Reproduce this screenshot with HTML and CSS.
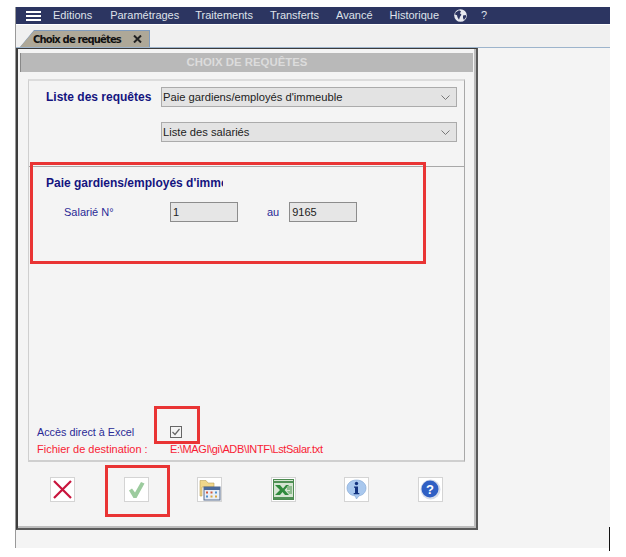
FILE: index.html
```html
<!DOCTYPE html>
<html lang="fr">
<head>
<meta charset="utf-8">
<title>Choix de requêtes</title>
<link rel="stylesheet" href="styles.css">
</head>
<body>
<div class="app">
  <nav class="menu">
    <svg class="burger" width="15" height="10" viewBox="0 0 15 10"><path d="M0 0h15v2H0zM0 4h15v2H0zM0 8h15v2H0z" fill="#fff"/></svg>
    <span class="m1">Editions</span>
    <span class="m2">Paramétrages</span>
    <span class="m3">Traitements</span>
    <span class="m4">Transferts</span>
    <span class="m5">Avancé</span>
    <span class="m6">Historique</span>
    <svg class="globe" width="13" height="13" viewBox="0 0 13 13"><circle cx="6.5" cy="6.5" r="6.3" fill="#e8eaf0"/><path d="M1.500 3.500 5 1.200l2 1-1 2 1.500 1.500-1.500 2-1 3-1.500-2.500-.5-2-2-.7zM9 6.500l2.800-.5.3 2-2.100 3-1-2z" fill="#2c3561"/></svg>
    <span class="m7">?</span>
  </nav>
  <div class="tabstrip">
    <div class="tab-edge"><div class="tab"><span>Choix de requêtes</span><svg class="tab-close" width="9" height="8" viewBox="0 0 9 8"><path d="M1 .5l7 7M8 .5l-7 7" stroke="#222" stroke-width="2" fill="none"/></svg></div></div>
  </div>
  <main class="workspace">
    <section class="dialog">
      <h1 class="title">CHOIX DE REQUÊTES</h1>
      <div class="panels">
        <div class="panel-top">
          <div class="row">
            <label class="label-main">Liste des requêtes</label>
            <div class="select"><span>Paie gardiens/employés d'immeuble</span><svg width="9" height="5" viewBox="0 0 9 5"><path d="M.5.5l4 4 4-4" fill="none" stroke="#777"/></svg></div>
          </div>
          <div class="row row-second">
            <div class="select"><span>Liste des salariés</span><svg width="9" height="5" viewBox="0 0 9 5"><path d="M.5.5l4 4 4-4" fill="none" stroke="#777"/></svg></div>
          </div>
        </div>
        <div class="panel-bottom">
          <h2 class="subtitle">Paie gardiens/employés d'immeuble</h2>
          <div class="range">
            <span class="range-label">Salarié N°</span>
            <div class="field">1</div>
            <span class="range-au">au</span>
            <div class="field">9165</div>
          </div>
          <div class="excel-row">
            <span class="excel-label">Accès direct à Excel</span>
            <svg class="check" width="12" height="12" viewBox="0 0 12 12"><rect x=".5" y=".5" width="11" height="11" fill="#f4f4f4" stroke="#666"/><path d="M2.500 6l2.500 2.500L9.500 3" fill="none" stroke="#666" stroke-width="1.200"/></svg>
          </div>
          <div class="dest-row">
            <span class="dest-label">Fichier de destination :</span>
            <span class="dest-path">E:\MAGI\gi\ADB\INTF\LstSalar.txt</span>
          </div>
        </div>
      </div>
      <div class="actions">
        <button class="btn" aria-label="Annuler"><svg width="23" height="23" viewBox="0 0 23 23"><path d="M3 3l17 17M20 3L3 20" stroke="#c8143c" stroke-width="2.200" fill="none"/></svg></button>
        <button class="btn" aria-label="Valider"><svg width="23" height="23" viewBox="0 0 23 23"><path d="M4 12.500l3-2 3 4 6-10.500 3.500 1.500-8 14.500h-3z" fill="#9ccb9e"/></svg></button>
        <button class="btn" aria-label="Ouvrir"><svg width="23" height="23" viewBox="0 0 23 23"><path d="M2 12V2.500h6L10 5h6v4H4v9H2z" fill="#f0d68a" stroke="#b9a057" stroke-width=".6"/><rect x="6" y="9" width="16" height="13" fill="#e9eef6" stroke="#55688a"/><path d="M6 9h16v3H6z" fill="#4d6b9c"/><path d="M8 13.500h2v2H8zM12.500 13.500h2v2h-2z" fill="#d2593c"/><path d="M17 13.500h2v2h-2zM8 17.500h2v2H8z" fill="#4e8fcb"/><path d="M12.500 17.500h2v2h-2zM17 17.500h2v2h-2z" fill="#d9a53c"/></svg></button>
        <button class="btn" aria-label="Excel"><svg width="23" height="23" viewBox="0 0 23 23"><rect x="1.500" y="1.500" width="20" height="20" fill="#d5e5d2" stroke="#4c8a50"/><path d="M2 3h19v2H2zM2 19h19v2H2z" fill="#4f9155"/><path d="M3 7h5l3 3.500L14 7h3l-4.500 5 4.500 5h-4l-2.500-3-2.500 3H3l5-5z" fill="#2f8a3c"/><path d="M15 8h5v8h-3l-2-3h3v-1h-3z" fill="#8fbd8f"/></svg></button>
        <button class="btn" aria-label="Information"><svg width="23" height="23" viewBox="0 0 23 23"><path d="M11.500 2c5.500 0 9.500 3.500 9.500 8s-3.500 7.500-7 7.800L11.500 21l-1.500-3.200C5.500 17.500 2 14.500 2 10s4-8 9.500-8z" fill="#a9c8ee" stroke="#7da2d2" stroke-width=".6"/><circle cx="11.500" cy="5.500" r="1.700" fill="#13337f"/><path d="M9 8.500h4v6.500h1.300v1.200H8.700V15H10V9.700H9z" fill="#13337f"/></svg></button>
        <button class="btn" aria-label="Aide"><svg width="23" height="23" viewBox="0 0 23 23"><circle cx="11.500" cy="11.500" r="10" fill="#d6dcea"/><circle cx="11" cy="11" r="8.500" fill="#2f5fc4"/><text x="11" y="15.500" text-anchor="middle" class="qmark">?</text></svg></button>
      </div>
    </section>
  </main>
</div>
<div class="mark mark-range"></div>
<div class="mark mark-check"></div>
<div class="mark mark-valid"></div>
<div class="edge-line"></div>
</body>
</html>
```
FILE: styles.css
```css
* { box-sizing: border-box; }
html, body { margin: 0; padding: 0; }
body {
  position: relative;
  width: 626px;
  height: 557px;
  background: #fff;
  font-family: "Liberation Sans", Arial, sans-serif;
  overflow: hidden;
}
.app {
  margin: 7px 0 0 15px;
  width: 595px;
  height: 541px;
  display: flex;
  flex-direction: column;
  border-left: 1px solid #999;
}
.menu {
  height: 17px;
  flex: none;
  background: #2c3561;
  color: #dfe2ea;
  font-size: 11px;
  display: flex;
  align-items: center;
  padding: 0 0 2px 10px;
}
.burger { margin: 2px 12px 0 0; }
.m2 { margin-left: 18px; }
.m3 { margin-left: 16px; }
.m4 { margin-left: 17px; }
.m5 { margin-left: 17px; }
.m6 { margin-left: 17px; }
.globe { margin: 2px 0 0 15px; }
.m7 { margin-left: 14px; }
.tabstrip {
  height: 23px;
  flex: none;
  margin-top: 1px;
  background: #f0f0f0;
  border-bottom: 1px solid #9db4cc;
  padding: 5px 0 0 4px;
}
.tab-edge {
  width: 130px;
  height: 17px;
  background: #7f9bbd;
  clip-path: polygon(14px 0, 100% 0, 100% 100%, 0 100%);
  padding: 1px 1px 0 0;
}
.tab {
  height: 16px;
  background: #aea898;
  clip-path: polygon(14px 0, 100% 0, 100% 100%, 0 100%);
  display: flex;
  align-items: center;
  padding-left: 13px;
  font-size: 10px;
  font-weight: bold;
  color: #111;
  font-family: "DejaVu Sans", sans-serif;
  letter-spacing: -0.85px;
}
.tab-close { margin-left: 12px; }
.workspace {
  flex: 1;
  background: #f4f4f4;
  min-height: 0;
}
.dialog {
  width: 462px;
  height: 482px;
  border: 2px solid #3c3c3c;
  border-top-width: 1px;
  border-right: 2px solid #5a5a5a;
  border-bottom: 2px solid #5a5a5a;
  background: #f4f4f4;
  padding: 4px 3px 0 2px;
  display: flex;
  flex-direction: column;
  box-shadow: inset -2px -2px 0 #bdbdbd;
}
.title {
  margin: 0;
  height: 19px;
  flex: none;
  background: #b9b9b9;
  color: #dcdcdc;
  font-size: 11.4px;
  font-weight: bold;
  line-height: 19px;
  text-align: center;
  border-left: 1px solid #888;
}
.panels {
  margin: 7px 0 0 8px;
  width: 437px;
  height: 383px;
  flex: none;
  display: flex;
  flex-direction: column;
  border: 1px solid #c8c8c8;
  border-width: 2px 1px 2px 1px;
  border-color: #dcdcdc #a8a8a8 #cfcfcf #cfcfcf;
}
.panel-top {
  height: 86px;
  flex: none;
  border-bottom: 1px solid #a8a8a8;
  padding: 6px 0 0 17px;
}
.row { display: flex; align-items: center; }
.row-second { margin-top: 15px; padding-left: 115px; }
.label-main {
  width: 115px;
  font-size: 12px;
  font-weight: bold;
  color: #14147f;
}
.select {
  width: 296px;
  height: 20px;
  background: #e3e3e3;
  border: 1px solid #ababab;
  font-size: 11.2px;
  color: #222;
  display: flex;
  align-items: center;
  justify-content: space-between;
  padding: 0 6px 0 1px;
}
.panel-bottom {
  flex: 1;
  display: flex;
  flex-direction: column;
  padding: 9px 0 0 17px;
  min-height: 0;
}
.subtitle {
  margin: 0;
  width: 177px;
  height: 14px;
  overflow: hidden;
  white-space: nowrap;
  font-size: 12px;
  line-height: 14px;
  font-weight: bold;
  color: #14147f;
}
.range {
  margin-top: 12px;
  margin-left: 18px;
  display: flex;
  align-items: center;
  font-size: 11px;
  color: #2a2a96;
}
.range-label { width: 106px; }
.range-au { margin: 0 10px 0 29px; }
.field {
  width: 68px;
  height: 20px;
  background: #e6e6e6;
  border: 1px solid #8c8c8c;
  color: #222;
  font-size: 11px;
  line-height: 18px;
  padding-left: 2px;
}
.excel-row {
  margin-top: auto;
  margin-left: -9px;
  display: flex;
  align-items: center;
  height: 14px;
  font-size: 10.8px;
  color: #2a2a96;
}
.excel-label { width: 133px; }
.dest-row {
  margin: 3px 0 4px -9px;
  display: flex;
  align-items: center;
  height: 14px;
  font-size: 11px;
  color: #f81c34;
}
.dest-label { width: 133px; }
.dest-path { letter-spacing: -0.35px; }
.actions {
  margin-top: 15px;
  margin-left: 30px;
  display: flex;
  gap: 48.500px;
}
.btn {
  width: 25px;
  height: 25px;
  padding: 0;
  background: #fff;
  border: 1px solid #d4d4d4;
  display: flex;
  align-items: center;
  justify-content: center;
}
.qmark {
  font-family: "Liberation Sans", sans-serif;
  font-size: 13px;
  font-weight: bold;
  fill: #fff;
}
.mark {
  position: absolute;
  border: 3px solid #e93434;
}
.mark-range { left: 30px; top: 162px; width: 396px; height: 102px; }
.mark-check { left: 154px; top: 406px; width: 46px; height: 38px; }
.mark-valid { left: 105px; top: 465px; width: 65px; height: 52px; }
.edge-line {
  position: absolute;
  left: 609px;
  top: 527px;
  width: 1px;
  height: 24px;
  background: #111;
}
```
